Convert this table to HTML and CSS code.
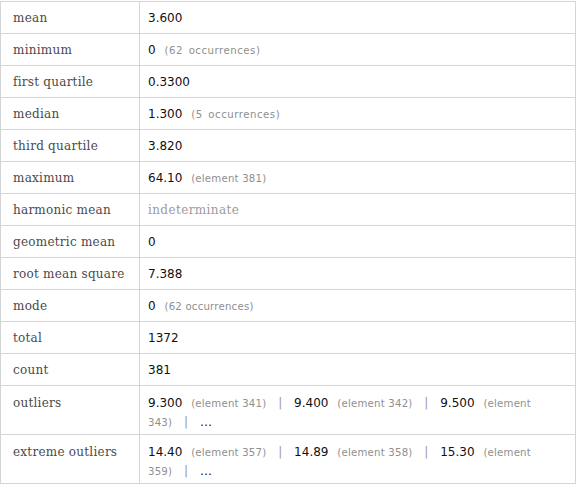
FILE: index.html
```html
<!DOCTYPE html>
<html>
<head>
<meta charset="utf-8">
<link rel="stylesheet" href="styles.css">
</head>
<body>
<table class="stats">
<tr><td class="lbl">mean</td><td class="val">3.600</td></tr>
<tr><td class="lbl">minimum</td><td class="val">0 <span class="note sp">(62 occurrences)</span></td></tr>
<tr><td class="lbl">first quartile</td><td class="val">0.3300</td></tr>
<tr><td class="lbl">median</td><td class="val">1.300 <span class="note sp">(5 occurrences)</span></td></tr>
<tr><td class="lbl">third quartile</td><td class="val">3.820</td></tr>
<tr><td class="lbl">maximum</td><td class="val">64.10 <span class="note">(element 381)</span></td></tr>
<tr><td class="lbl">harmonic mean</td><td class="val"><span class="indet">indeterminate</span></td></tr>
<tr><td class="lbl">geometric mean</td><td class="val">0</td></tr>
<tr><td class="lbl">root mean square</td><td class="val">7.388</td></tr>
<tr><td class="lbl">mode</td><td class="val">0 <span class="note">(62 occurrences)</span></td></tr>
<tr><td class="lbl">total</td><td class="val">1372</td></tr>
<tr><td class="lbl">count</td><td class="val">381</td></tr>
<tr class="multi"><td class="lbl">outliers</td><td class="val">9.300 <span class="note">(element 341)</span> <span class="bar">|</span> 9.400 <span class="note">(element 342)</span> <span class="bar">|</span> 9.500 <span class="note">(element 343)</span> <span class="bar">|</span> …</td></tr>
<tr class="multi"><td class="lbl">extreme outliers</td><td class="val">14.40 <span class="note">(element 357)</span> <span class="bar">|</span> 14.89 <span class="note">(element 358)</span> <span class="bar">|</span> 15.30 <span class="note">(element 359)</span> <span class="bar">|</span> …</td></tr>
</table>
</body>
</html>
```
FILE: styles.css
```css
html, body {
  margin: 0;
  padding: 0;
  background: #ffffff;
}
.stats {
  border-collapse: collapse;
  width: 576px;
  margin-top: 1px;
}
.stats td {
  border: 1px solid #d5d5d5;
  height: 31px;
  padding: 0;
  vertical-align: middle;
}
.lbl {
  width: 126px;
  padding-left: 12px !important;
  font-family: "DejaVu Serif", serif;
  font-size: 12px;
  letter-spacing: 0.25px;
  color: #4a4a4a;
}
.val {
  padding-left: 8px !important;
  padding-right: 27px !important;
  font-family: "DejaVu Sans", sans-serif;
  font-size: 12px;
  color: #111111;
}
.note {
  font-size: 10.2px;
  color: #8f8f8f;
  margin-left: 5px;
  letter-spacing: 0.2px;
}
.note.sp {
  letter-spacing: 0.5px;
  word-spacing: 2px;
}
.bar {
  color: #999999;
  margin: 0 8px;
}
.indet {
  font-family: "DejaVu Serif", serif;
  font-size: 12px;
  letter-spacing: 0.4px;
  color: #9a9a9a;
}
.multi td {
  height: 38px;
  vertical-align: top;
  line-height: 19px;
}
.multi .val,
.multi .lbl {
  padding-top: 8px !important;
  padding-bottom: 2px !important;
}
```
